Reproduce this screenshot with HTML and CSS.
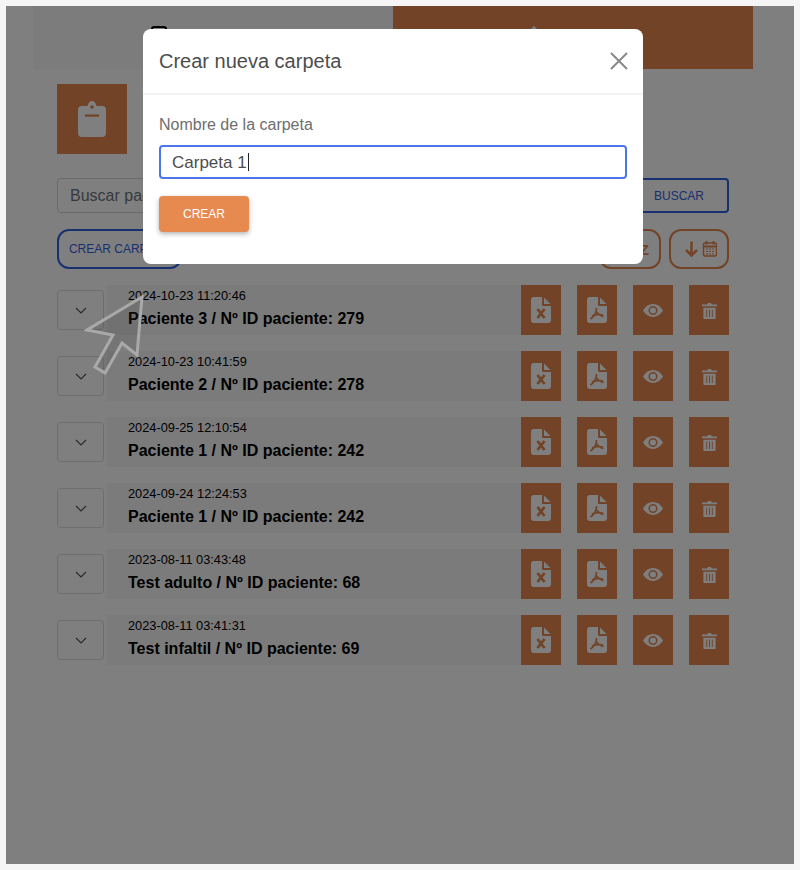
FILE: index.html
```html
<!DOCTYPE html>
<html lang="es">
<head>
  <meta charset="UTF-8">
  <title>Crear nueva carpeta</title>
  <link rel="stylesheet" href="styles.css">
</head>
<body>
<div class="frame">
  <div class="tabs">
    <div class="tab">
      <svg class="tab-icon" viewBox="0 0 16 16"><rect x="1" y="1" width="14" height="14" rx="2" fill="none" stroke="#000" stroke-width="2"/></svg>
    </div>
    <div class="tab tab-active">
      <svg class="tab-icon" viewBox="0 0 16 16"><path d="M8 0l7 7v9H1V7z" fill="#fff"/></svg>
    </div>
  </div>

  <div class="main">
    <div class="page-icon">
      <svg viewBox="0 0 28 36" width="28" height="36"><path d="M4 5h5.500C10 2 12 0 14 0s4 2 4.500 5H24a4 4 0 0 1 4 4v23a4 4 0 0 1-4 4H4a4 4 0 0 1-4-4V9a4 4 0 0 1 4-4z" fill="#fff"/><circle cx="14" cy="6" r="1.800" fill="#e4874e"/><rect x="7" y="13.500" width="14" height="2.200" fill="#e4874e"/></svg>
    </div>

    <div class="search">
      <input class="search-input" type="text" placeholder="Buscar paciente">
      <button class="btn-search">BUSCAR</button>
    </div>

    <div class="toolbar">
      <button class="btn-folder">CREAR CARPETA</button>
      <div class="sort">
        <button class="btn-sort"><span class="az">Z</span></button>
        <button class="btn-sort btn-sort-date">
          <svg viewBox="0 0 32 16" width="32" height="16">
            <path d="M6.500 0.500v14M1 9l5.500 5.500L12 9" fill="none" stroke="#e4874e" stroke-width="2.500"/>
            <rect x="18.500" y="2" width="13" height="13" rx="1.500" fill="none" stroke="#e4874e" stroke-width="1.500"/>
            <path d="M18.500 5.500h13M21.500 0v3.500M28.500 0v3.500" stroke="#e4874e" stroke-width="1.800"/>
            <path d="M21 8h2M24 8h2M27 8h2M21 10.500h2M24 10.500h2M27 10.500h2M21 13h2M24 13h2M27 13h2" stroke="#e4874e" stroke-width="1.200"/>
          </svg>
        </button>
      </div>
    </div>

    <div class="list" id="list"></div>
  </div>

  <div class="overlay">
    <svg class="pointer" viewBox="0 0 64 80" width="64" height="80">
      <path d="M58 2L3 35l26 5-18 32 10 6 17-30 15 12z" fill="rgba(60,60,60,.15)" stroke="#a9a9a9" stroke-width="3"/>
    </svg>
    <div class="modal">
      <div class="modal-head">
        <h2 class="modal-title">Crear nueva carpeta</h2>
        <svg class="modal-close" viewBox="0 0 18 18" width="18" height="18"><path d="M1 1l16 16M17 1L1 17" stroke="#888" stroke-width="2"/></svg>
      </div>
      <div class="modal-body">
        <label class="field-label">Nombre de la carpeta</label>
        <div class="field">Carpeta 1<span class="caret"></span></div>
        <button class="btn-create">CREAR</button>
      </div>
    </div>
  </div>
</div>

<script>
  const patients = [
    ['2024-10-23 11:20:46', 'Paciente 3 / Nº ID paciente: 279'],
    ['2024-10-23 10:41:59', 'Paciente 2 / Nº ID paciente: 278'],
    ['2024-09-25 12:10:54', 'Paciente 1 / Nº ID paciente: 242'],
    ['2024-09-24 12:24:53', 'Paciente 1 / Nº ID paciente: 242'],
    ['2023-08-11 03:43:48', 'Test adulto / Nº ID paciente: 68'],
    ['2023-08-11 03:41:31', 'Test infaltil / Nº ID paciente: 69']
  ];

  // sheet with the corner cut off, the fold is a separate triangle
  const sheet = 'M3 0h8v8a1 1 0 0 0 1 1h8v14a3 3 0 0 1-3 3H3a3 3 0 0 1-3-3V3a3 3 0 0 1 3-3zM13 0.500L19.500 7H13z';
  const icons = [
    `<svg viewBox="0 0 20 26" width="20" height="26"><path d="${sheet}" fill="#fff"/><path d="M6.500 12l7 9M13.500 12l-7 9" stroke="#e4874e" stroke-width="2.800"/></svg>`,
    `<svg viewBox="0 0 20 26" width="20" height="26"><path d="${sheet}" fill="#fff"/><path d="M9.500 11c0 5-3 9-6 11M9.500 15c2 2.500 4 4 7 4.500M5 19c3-1.500 7-1.500 11-1" fill="none" stroke="#e4874e" stroke-width="1.700"/></svg>`,
    `<svg viewBox="0 0 20 13" width="20" height="13"><path d="M0 6.500c5-8.600 15-8.600 20 0-5 8.600-15 8.600-20 0z" fill="#fff"/><circle cx="10" cy="6.500" r="3.800" fill="none" stroke="#e4874e" stroke-width="1.500"/></svg>`,
    `<svg viewBox="0 0 16 18" width="15" height="17"><path d="M0 2.500h5.500L6.500 1h3l1 1.500H16V4.500H0zM1.500 6h13v11a1 1 0 0 1-1 1h-11a1 1 0 0 1-1-1z" fill="#fff"/><path d="M5 8V16M8 8V16M11 8V16" stroke="#e4874e" stroke-width="1"/></svg>`
  ];

  document.getElementById('list').innerHTML = patients.map(p => `
    <div class="row">
      <button class="toggle"><svg viewBox="0 0 12 7" width="12" height="7"><path d="M1 1l5 5 5-5" fill="none" stroke="#555" stroke-width="1.200"/></svg></button>
      <div class="info">
        <div class="info-date">${p[0]}</div>
        <div class="info-name">${p[1]}</div>
      </div>
      <div class="actions">${icons.map(i => `<button class="action">${i}</button>`).join('')}</div>
    </div>`).join('');
</script>
</body>
</html>
```

FILE: styles.css
```css
body {
  margin: 0;
  background-color: #f5f5f5;
  font-family: "Liberation Sans", Arial, sans-serif;
}

button {
  font-family: inherit;
  cursor: pointer;
}

.frame {
  position: relative;
  width: 788px;
  height: 858px;
  margin: 6px;
  background-color: #fff;
  overflow: hidden;
}

.tabs {
  display: flex;
  height: 63px;
  margin: 0 41px 0 27px;
}
.tab {
  box-sizing: border-box;
  width: 50%;
  padding: 20px 0 0 118px;
  background-color: #f9f9f9;
}
.tab-active {
  padding-left: 133px;
  background-color: #e4874e;
}
.tab-icon {
  display: block;
  width: 16px;
  height: 16px;
}

.main {
  display: flex;
  flex-direction: column;
  margin: 15px 65px 0 51px;
}

.page-icon {
  display: flex;
  align-items: center;
  justify-content: center;
  width: 70px;
  height: 70px;
  background-color: #e4874e;
}

.search {
  display: flex;
  gap: 8px;
  margin-top: 24px;
}
.search-input {
  flex: 1;
  height: 35px;
  box-sizing: border-box;
  padding: 0 12px;
  border: 1px solid #ced4da;
  border-radius: 4px;
  font-family: inherit;
  font-size: 16px;
}
.search-input::placeholder {
  color: #6c757d;
}
.btn-search {
  width: 100px;
  height: 35px;
  background: #fff;
  border: 2px solid #2f63e0;
  border-radius: 4px;
  color: #2f63e0;
  font-size: 12px;
}

.toolbar {
  display: flex;
  justify-content: space-between;
  margin-top: 16px;
}
.btn-folder {
  width: 125px;
  height: 40px;
  padding: 0;
  background: #fff;
  border: 2px solid #2f63e0;
  border-radius: 12px;
  color: #2f63e0;
  font-size: 12px;
}
.sort {
  display: flex;
  gap: 8px;
}
.btn-sort {
  display: flex;
  align-items: center;
  justify-content: flex-end;
  width: 62px;
  height: 40px;
  padding: 0 10px;
  background: #fff;
  border: 2px solid #e4874e;
  border-radius: 12px;
}
.btn-sort-date {
  justify-content: center;
  width: 60px;
  padding: 0 0 0 4px;
}
.az {
  color: #e4874e;
  font-size: 15px;
  font-weight: bold;
}

.list {
  display: flex;
  flex-direction: column;
  gap: 16px;
  margin-top: 16px;
}
.row {
  display: flex;
  align-items: center;
  height: 50px;
}
.toggle {
  display: flex;
  align-items: center;
  justify-content: center;
  flex: none;
  width: 47px;
  height: 40px;
  padding: 0;
  margin-right: 3px;
  background: #fff;
  border: 1px solid #ddd;
  border-radius: 4px;
}
.info {
  flex: 1;
  align-self: stretch;
  padding: 3px 0 0 21px;
  background-color: #f6f6f6;
  color: #000;
}
.info-date {
  font-size: 12.800px;
  line-height: 16px;
}
.info-name {
  margin-top: 5px;
  font-size: 16px;
  font-weight: bold;
  line-height: 20px;
}
.actions {
  display: flex;
  gap: 16px;
}
.action {
  display: flex;
  align-items: center;
  justify-content: center;
  width: 40px;
  height: 50px;
  padding: 0;
  background-color: #e4874e;
  border: none;
}

.overlay {
  position: absolute;
  top: 0;
  left: 0;
  right: 0;
  bottom: 0;
  background-color: rgba(0, 0, 0, 0.5);
}
.pointer {
  position: absolute;
  left: 78px;
  top: 289px;
}

.modal {
  position: absolute;
  top: 23px;
  left: 137px;
  width: 500px;
  height: 235px;
  background-color: #fff;
  border-radius: 8px;
}
.modal-head {
  display: flex;
  align-items: center;
  justify-content: space-between;
  height: 64px;
  padding: 0 15px 0 16px;
  border-bottom: 2px solid #f3f3f3;
}
.modal-title {
  margin: 0;
  color: #4d4d4d;
  font-size: 20px;
  font-weight: normal;
}
.modal-body {
  padding: 21px 16px 0;
}
.field-label {
  display: block;
  color: #6e6e6e;
  font-size: 16px;
  line-height: 18px;
}
.field {
  box-sizing: border-box;
  height: 34px;
  margin-top: 11px;
  padding: 0 11px;
  border: 2px solid #4a76ea;
  border-radius: 4px;
  color: #4d4d4d;
  font-size: 17px;
  line-height: 32px;
}
.caret {
  display: inline-block;
  width: 1px;
  height: 18px;
  margin-left: 1px;
  background-color: #222;
  vertical-align: -3px;
}
.btn-create {
  display: block;
  width: 90px;
  height: 36px;
  margin-top: 17px;
  background-color: #e68a50;
  border: none;
  border-radius: 4px;
  box-shadow: 0 2px 5px rgba(0, 0, 0, 0.3);
  color: #fff;
  font-size: 12px;
}
```
